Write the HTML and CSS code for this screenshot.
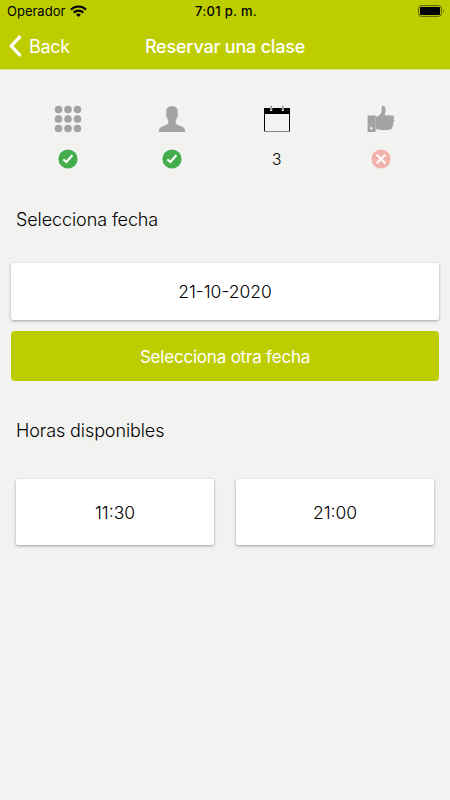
FILE: index.html
```
<!DOCTYPE html>
<html lang="es">
<head>
  <meta charset="UTF-8">
  <meta name="viewport" content="width=device-width, initial-scale=1">
  <title>Reservar una clase</title>
  <link rel="stylesheet" href="styles.css">
</head>
<body>

  <header class="header">
    <div class="status-bar">
      <div class="carrier">
        <span class="carrier-name">Operador</span>
        <svg class="wifi" width="17" height="12" viewBox="0 0 17 12" fill="none" stroke="#000" stroke-width="2.200">
          <path d="M1 4.600a10.600 10.600 0 0 1 15 0"/>
          <path d="M3.800 7.600a6.700 6.700 0 0 1 9.400 0"/>
          <path d="M8.500 11.900 6.100 9.600a3.400 3.400 0 0 1 4.800 0z" fill="#000" stroke="none"/>
        </svg>
      </div>
      <span class="clock">7:01 p. m.</span>
      <svg class="battery" width="27" height="12" viewBox="0 0 27 12">
        <rect x=".6" y=".6" width="22.800" height="10.800" rx="3" fill="none" stroke="#000" stroke-opacity=".55"/>
        <rect x="2" y="2" width="20" height="8" rx="1"/>
        <path d="M25 4.200c1 .3 1 3.300 0 3.600z" fill-opacity=".6"/>
      </svg>
    </div>
    <nav class="nav-bar">
      <a class="back" href="#">
        <svg width="13" height="22" viewBox="0 0 13 22" fill="none" stroke="#fff" stroke-width="3.200">
          <path d="M11.500 1.200 2.300 11l9.200 9.800"/>
        </svg>
        <span class="back-label">Back</span>
      </a>
      <h1 class="title">Reservar una clase</h1>
    </nav>
  </header>

  <main>
    <div class="steps">
      <div class="step">
        <svg class="step-icon" width="28" height="28" viewBox="0 0 28 28" fill="#a3a3a3">
          <circle cx="4.500" cy="4.500" r="3.800"/><circle cx="14" cy="4.500" r="3.800"/><circle cx="23.500" cy="4.500" r="3.800"/>
          <circle cx="4.500" cy="14" r="3.800"/><circle cx="14" cy="14" r="3.800"/><circle cx="23.500" cy="14" r="3.800"/>
          <circle cx="4.500" cy="23.500" r="3.800"/><circle cx="14" cy="23.500" r="3.800"/><circle cx="23.500" cy="23.500" r="3.800"/>
        </svg>
        <svg class="step-state" width="20" height="20" viewBox="0 0 20 20">
          <circle cx="10" cy="10" r="9.600" fill="#43ad4b"/>
          <path d="M5.400 10.400 8.300 13 14.400 6.200" fill="none" stroke="#fff" stroke-width="2.200"/>
        </svg>
      </div>
      <div class="step">
        <svg class="step-icon" width="28" height="28" viewBox="0 0 28 28" fill="#a3a3a3">
          <path d="M14 1.200c4 0 5.800 2.100 5.700 5.300 0 .8-.1 1.700-.2 2.400.9.300.6 2.900-.6 3.600-.3 1.500-.7 2.300-1.100 3.100-.3 1.600-.1 2.900.6 3.700 1.200 1.300 5.300 1.800 7.200 3.200 1.200.9 1.500 2.500 1.500 4.500H.9c0-2 .3-3.600 1.500-4.500 1.900-1.400 6-1.900 7.200-3.200.7-.8.9-2.100.6-3.700-.4-.8-.8-1.600-1.100-3.100-1.200-.7-1.500-3.300-.6-3.600-.1-.7-.2-1.600-.2-2.400-.1-3.200 1.700-5.300 5.700-5.300z"/>
        </svg>
        <svg class="step-state" width="20" height="20" viewBox="0 0 20 20">
          <circle cx="10" cy="10" r="9.600" fill="#43ad4b"/>
          <path d="M5.400 10.400 8.300 13 14.400 6.200" fill="none" stroke="#fff" stroke-width="2.200"/>
        </svg>
      </div>
      <div class="step">
        <svg class="step-icon" width="28" height="28" viewBox="0 0 28 28">
          <path d="M1 3h26v24H1z"/>
          <path d="M2 9h24v17H2z" fill="#f2f2f0"/>
          <path d="M1 26.500h26" stroke="#888"/>
          <path d="M8.200 1v5M19.800 1v5" stroke="#f2f2f0" stroke-width="2"/>
          <path d="M8.200.8v4.200M19.800.8v4.200" stroke="#888" stroke-width="1.300"/>
        </svg>
        <span class="step-number">3</span>
      </div>
      <div class="step">
        <svg class="step-icon" width="28" height="28" viewBox="0 0 28 28" fill="#a3a3a3">
          <path d="M.6 10.500h8v16.500h-8z"/>
          <circle cx="4.400" cy="23.300" r="1.200" fill="#f2f2f0"/>
          <path d="M8.500 11.800c3.600-.4 5.400-2.600 6-5C15 4.700 14.300 1.300 15.500.8c1.500-.4 2.900 1.100 3.100 3.300.2 2.200-.7 4.200-.8 6.200l7.500.1c2.300.2 2.400 3 1 3.500 1.300.8 1.100 3.200-.3 3.800 1 1 .5 3-.8 3.400.7 1.200.1 3-1.300 3.200-2 .9-8.200 1.100-10.800.5l-4.600-.6z"/>
        </svg>
        <svg class="step-state" width="20" height="20" viewBox="0 0 20 20">
          <circle cx="10" cy="10" r="9.600" fill="#f1b2ac"/>
          <path d="M5.700 5.700l8.600 8.600M14.300 5.700l-8.600 8.600" stroke="#fff" stroke-width="2"/>
        </svg>
      </div>
    </div>

    <h2 class="section-title">Selecciona fecha</h2>
    <div class="card date">21-10-2020</div>
    <button class="button">Selecciona otra fecha</button>

    <h2 class="section-title hours-title">Horas disponibles</h2>
    <div class="hours">
      <div class="card hour">11:30</div>
      <div class="card hour">21:00</div>
    </div>
  </main>

</body>
</html>
```

FILE: styles.css
```
* {
  box-sizing: border-box;
}

body {
  margin: 0;
  min-height: 100vh;
  font-family: Inter, "Liberation Sans", sans-serif;
  font-size: 17px;
  font-weight: 300;
  color: #000;
  background-color: #f2f2f0;
}

.header {
  height: 70px;
  background-color: #becd00;
  border-bottom: 1px solid #dce28c;
}

.status-bar {
  display: grid;
  grid-template-columns: 1fr auto 1fr;
  align-items: center;
  height: 22px;
  padding: 0 5px 0 7px;
}

.carrier {
  display: flex;
  align-items: center;
  gap: 5px;
}

.carrier-name {
  font-size: 13px;
  font-weight: 400;
}

.clock {
  font-size: 13px;
  font-weight: 500;
  letter-spacing: 0.3px;
}

.battery {
  justify-self: end;
}

.nav-bar {
  display: grid;
  grid-template-columns: 1fr auto 1fr;
  align-items: center;
  height: 48px;
  padding: 0 9px;
  color: #fff;
}

.back {
  display: flex;
  align-items: center;
  gap: 7px;
  color: #fff;
  text-decoration: none;
}

.back-label {
  font-size: 18px;
  font-weight: 400;
  letter-spacing: -0.3px;
}

.title {
  margin: 0;
  font-size: 18px;
  font-weight: 500;
  letter-spacing: -0.2px;
}

.steps {
  display: grid;
  grid-template-columns: repeat(4, 1fr);
  padding: 35px 17px 0 16px;
}

.step {
  display: flex;
  flex-direction: column;
  align-items: center;
  gap: 16px;
}

.step-number {
  font-size: 15.5px;
  font-weight: 300;
  line-height: 22px;
}

.section-title {
  margin: 37px 16px 31px;
  font-size: 18px;
  font-weight: 300;
  line-height: 24px;
  letter-spacing: -0.1px;
}

.card {
  display: flex;
  align-items: center;
  justify-content: center;
  background-color: #fff;
  border-radius: 2px;
  box-shadow: 0 1px 3px rgba(0, 0, 0, 0.35);
}

.date {
  height: 57px;
  margin: 0 11px 11px;
  font-size: 17.5px;
}

.button {
  display: block;
  width: calc(100% - 22px);
  height: 50px;
  margin: 0 11px;
  padding: 2px 0 0;
  border: none;
  border-radius: 4px;
  background-color: #becd00;
  color: #fff;
  font-family: inherit;
  font-size: 17px;
  font-weight: 400;
  letter-spacing: -0.2px;
}

.hours-title {
  margin: 38px 16px 36px;
}

.hours {
  display: grid;
  grid-template-columns: 1fr 1fr;
  gap: 22px;
  padding: 0 16px;
}

.hour {
  height: 66px;
  font-size: 17.5px;
}
```
